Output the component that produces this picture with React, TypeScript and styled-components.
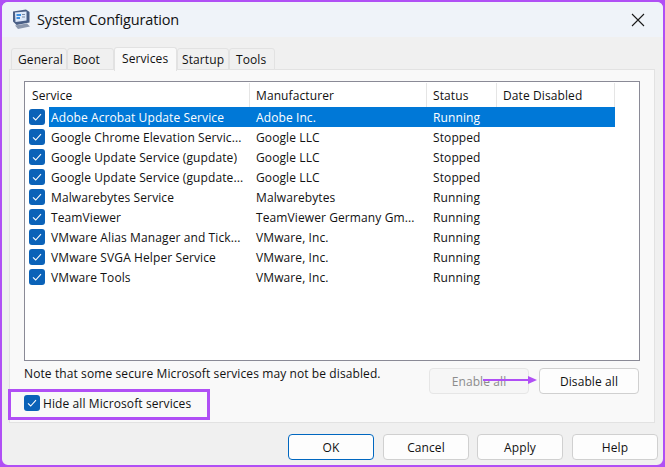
import React from 'react';
import styled, { createGlobalStyle } from 'styled-components';

interface ServiceRow {
  name: string;
  maker: string;
  status: string;
}

const services: ServiceRow[] = [
  { name: 'Adobe Acrobat Update Service', maker: 'Adobe Inc.', status: 'Running' },
  { name: 'Google Chrome Elevation Servic...', maker: 'Google LLC', status: 'Stopped' },
  { name: 'Google Update Service (gupdate)', maker: 'Google LLC', status: 'Stopped' },
  { name: 'Google Update Service (gupdate...', maker: 'Google LLC', status: 'Stopped' },
  { name: 'Malwarebytes Service', maker: 'Malwarebytes', status: 'Running' },
  { name: 'TeamViewer', maker: 'TeamViewer Germany Gm...', status: 'Running' },
  { name: 'VMware Alias Manager and Tick...', maker: 'VMware, Inc.', status: 'Running' },
  { name: 'VMware SVGA Helper Service', maker: 'VMware, Inc.', status: 'Running' },
  { name: 'VMware Tools', maker: 'VMware, Inc.', status: 'Running' },
];

const tabs = [
  { label: 'General', width: 56, pad: 6 },
  { label: 'Boot', width: 47, pad: 5 },
  { label: 'Services', width: 63, pad: 7 },
  { label: 'Startup', width: 52, pad: 4 },
  { label: 'Tools', width: 46, pad: 6 },
];

const CheckBox: React.FC = () => (
  <Check>
    <svg width="10" height="10" viewBox="0 0 10 10">
      <path d="M1 5.4 L3.7 8 L9 2.2" fill="none" stroke="#fff" strokeWidth="1.1" />
    </svg>
  </Check>
);

const AppIcon: React.FC = () => (
  <svg width="19" height="21" viewBox="0 0 19 21">
    <path d="M1 2.5 L14 0.5 L17.5 3 L17.5 13.5 L4.5 16 L1 12.5 Z" fill="#4a5f86" />
    <path d="M3 3.6 L14.5 2.4 L14.5 11.6 L3.5 13 Z" fill="#dfeafa" />
    <path d="M4.5 5 H9 V7 H4.5 Z M4.5 8 H8 V10 H4.5 Z" fill="#3d8fe0" />
    <path d="M10 5 H13 V6 H10 Z M10 7.5 H13 V8.5 H10 Z" fill="#7c8aa3" />
    <path d="M3 16.5 L15 14.5 L18 17.5 L6 20 Z" fill="#8b97ad" />
  </svg>
);

export default function App() {
  return (
    <Frame>
      <GlobalStyle />
      <TitleBar>
        <AppIcon />
        <Title>System Configuration</Title>
        <CloseButton>
          <svg width="14" height="14" viewBox="0 0 14 14">
            <path d="M1 1 L13 13 M13 1 L1 13" stroke="#1a1a1a" strokeWidth="1.1" fill="none" />
          </svg>
        </CloseButton>
      </TitleBar>
      <TabStrip>
        {tabs.map((tab) => (
          <Tab key={tab.label} $active={tab.label === 'Services'} $width={tab.width} $pad={tab.pad}>
            {tab.label}
          </Tab>
        ))}
      </TabStrip>
      <Panel>
        <ListBox>
          <HeaderRow>
            <HeaderCell>Service</HeaderCell>
            <HeaderCell>Manufacturer</HeaderCell>
            <HeaderCell>Status</HeaderCell>
            <HeaderCell>Date Disabled</HeaderCell>
          </HeaderRow>
          {services.map((row, i) => (
            <Row key={row.name}>
              <CheckCell>
                <CheckBox />
              </CheckCell>
              <RowBody $selected={i === 0}>
                <NameCell>{row.name}</NameCell>
                <Cell>{row.maker}</Cell>
                <Cell>{row.status}</Cell>
                <Cell />
              </RowBody>
            </Row>
          ))}
        </ListBox>
        <ActionRow>
          <Note>Note that some secure Microsoft services may not be disabled.</Note>
          <ActionButtons>
            <Button $width={100} $disabled>Enable all</Button>
            <Button $width={100}>Disable all</Button>
          </ActionButtons>
          <Arrow width="55" height="10" viewBox="0 0 55 10">
            <path d="M0 5 H47" stroke="#b04ff5" strokeWidth="2" />
            <path d="M45 1 L54 5 L45 9 Z" fill="#b04ff5" />
          </Arrow>
        </ActionRow>
        <HideRow>
          <CheckBox />
          <span>Hide all Microsoft services</span>
          <Highlight />
        </HideRow>
      </Panel>
      <Footer>
        <Button $width={86} $primary>OK</Button>
        <Button $width={86}>Cancel</Button>
        <ApplyButton $width={86}>Apply</ApplyButton>
        <Button $width={86}>Help</Button>
      </Footer>
    </Frame>
  );
}

const GlobalStyle = createGlobalStyle`
  html, body {
    margin: 0;
    padding: 0;
    background: #b04ff5;
  }
  * {
    box-sizing: border-box;
  }
`;

const Frame = styled.div`
  position: relative;
  width: 665px;
  height: 467px;
  border: 2px solid #b04ff5;
  border-radius: 8px;
  background: #f0f0f0;
  overflow: hidden;
  font-family: "Open Sans", "Noto Sans", sans-serif;
  font-size: 12px;
  letter-spacing: 0.1px;
  color: #111;
`;

const TitleBar = styled.div`
  display: flex;
  align-items: center;
  height: 35px;
  padding: 0 18px 0 10px;
  background: #eff3f9;
`;

const Title = styled.div`
  margin-left: 6px;
  font-size: 14.5px;
  letter-spacing: -0.15px;
  flex: 1;
`;

const CloseButton = styled.div`
  display: flex;
`;

const TabStrip = styled.div`
  display: flex;
  align-items: flex-end;
  height: 24px;
  margin: 9px 0 0 9px;
`;

const Tab = styled.div<{ $active?: boolean; $width: number; $pad: number }>`
  display: flex;
  align-items: center;
  position: relative;
  z-index: ${(p) => (p.$active ? 1 : 0)};
  width: ${(p) => p.$width}px;
  height: ${(p) => (p.$active ? 24 : 22)}px;
  margin-bottom: ${(p) => (p.$active ? -1 : 0)}px;
  padding: 0 0 ${(p) => (p.$active ? 3 : 0)}px ${(p) => p.$pad}px;
  background: ${(p) => (p.$active ? '#f9f9f9' : '#f0f0f0')};
  border: 1px solid #e2e2e2;
  border-bottom: ${(p) => (p.$active ? 'none' : '1px solid #e2e2e2')};
  border-radius: 3px 3px 0 0;
  white-space: nowrap;
`;

const Panel = styled.div`
  height: 354px;
  margin: -1px 8px 0 7px;
  padding: 11px 14px 0;
  background: #f9f9f9;
  border: 1px solid #e2e2e2;
`;

const ListBox = styled.div`
  width: 616px;
  height: 280px;
  padding-top: 1px;
  background: #fff;
  border: 1px solid #8a8a96;
`;

const HeaderRow = styled.div`
  display: grid;
  grid-template-columns: 225px 177px 70px 118px;
  height: 24px;
`;

const HeaderCell = styled.div`
  display: flex;
  align-items: center;
  padding-left: 6px;
  border-right: 1px solid #e5e5e5;

  &:first-child {
    padding-left: 7px;
  }
`;

const Row = styled.div`
  display: flex;
  height: 20px;
`;

const CheckCell = styled.div`
  display: flex;
  align-items: center;
  justify-content: center;
  width: 24px;
  padding-right: 1px;
`;

const Check = styled.div`
  display: flex;
  align-items: center;
  justify-content: center;
  flex: none;
  width: 16px;
  height: 16px;
  border-radius: 3px;
  background: #0a62b8;
`;

const RowBody = styled.div<{ $selected?: boolean }>`
  display: grid;
  grid-template-columns: 200px 177px 70px 119px;
  width: 566px;
  align-items: center;
  background: ${(p) => (p.$selected ? '#0078d7' : 'transparent')};
  color: ${(p) => (p.$selected ? '#fff' : '#111')};
`;

const NameCell = styled.div`
  padding-left: 2px;
  white-space: nowrap;
  overflow: hidden;
`;

const Cell = styled.div`
  padding-left: 7px;
  white-space: nowrap;
  overflow: hidden;
`;

const ActionRow = styled.div`
  position: relative;
  display: flex;
  justify-content: space-between;
  width: 615px;
  height: 26px;
  margin-top: 7px;
`;

const Note = styled.div`
  line-height: 12px;
`;

const ActionButtons = styled.div`
  display: flex;
  gap: 10px;
`;

const Button = styled.div<{ $width: number; $disabled?: boolean; $primary?: boolean }>`
  display: flex;
  align-items: center;
  justify-content: center;
  width: ${(p) => p.$width}px;
  height: 26px;
  border-radius: 4px;
  background: ${(p) => (p.$disabled ? '#f6f6f6' : '#fdfdfd')};
  color: ${(p) => (p.$disabled ? '#8c8c8c' : '#111')};
  border: 1px solid ${(p) => (p.$primary ? '#0067c0' : p.$disabled ? '#e6e6e6' : '#d0d0d0')};
`;

const ApplyButton = styled(Button)`
  margin-left: -1px;
`;

const Arrow = styled.svg`
  position: absolute;
  left: 459px;
  top: 7px;
`;

const HideRow = styled.div`
  position: relative;
  display: flex;
  align-items: center;
  gap: 3px;
  height: 16px;
  margin-top: 1px;
`;

const Highlight = styled.div`
  position: absolute;
  left: -16px;
  top: -6px;
  width: 202px;
  height: 31px;
  border: 3px solid #b04ff5;
`;

const Footer = styled.div`
  display: flex;
  justify-content: flex-end;
  gap: 9px;
  margin-top: 11px;
  padding-right: 5px;
`;
